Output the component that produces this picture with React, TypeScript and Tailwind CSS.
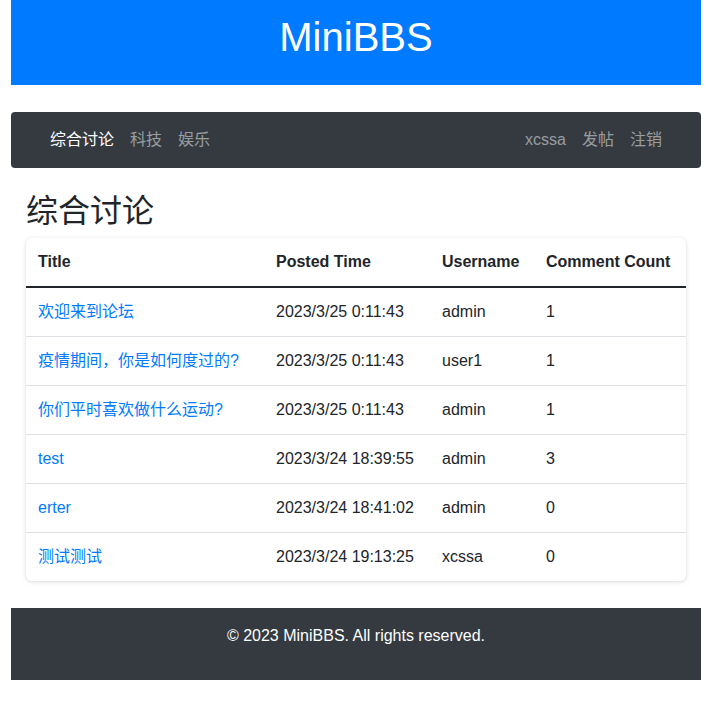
const posts = [
  { title: '欢迎来到论坛', time: '2023/3/25 0:11:43', user: 'admin', count: 1 },
  { title: '疫情期间，你是如何度过的?', time: '2023/3/25 0:11:43', user: 'user1', count: 1 },
  { title: '你们平时喜欢做什么运动?', time: '2023/3/25 0:11:43', user: 'admin', count: 1 },
  { title: 'test', time: '2023/3/24 18:39:55', user: 'admin', count: 3 },
  { title: 'erter', time: '2023/3/24 18:41:02', user: 'admin', count: 0 },
  { title: '测试测试', time: '2023/3/24 19:13:25', user: 'xcssa', count: 0 },
]

export default function App() {
  return (
    <div className="min-h-[718px] bg-white text-[16px] text-[#212529] font-['Liberation_Sans','Noto_Sans_CJK_SC',sans-serif]">
      <div className="ml-[11px] w-[690px]">
        <header className="h-[85px] bg-[#007bff] flex items-center justify-center pb-[12px]">
          <h1 className="text-[40px] leading-[1.2] text-white">MiniBBS</h1>
        </header>

        <nav className="mt-[27px] h-[56px] rounded bg-[#343a40] flex items-center justify-between px-[31px]">
          <ul className="flex">
            <li><a className="px-2 text-white" href="#">综合讨论</a></li>
            <li><a className="px-2 text-[rgba(255,255,255,0.5)]" href="#">科技</a></li>
            <li><a className="px-2 text-[rgba(255,255,255,0.5)]" href="#">娱乐</a></li>
          </ul>
          <ul className="flex">
            <li><a className="px-2 text-[rgba(255,255,255,0.5)]" href="#">xcssa</a></li>
            <li><a className="px-2 text-[rgba(255,255,255,0.5)]" href="#">发帖</a></li>
            <li><a className="px-2 text-[rgba(255,255,255,0.5)]" href="#">注销</a></li>
          </ul>
        </nav>

        <main className="px-[15px]">
          <h2 className="mt-[24px] mb-[8px] text-[32px] leading-[1.2] font-normal">综合讨论</h2>
          <div className="rounded-md bg-white shadow-[0_1px_4px_rgba(0,0,0,0.15)] overflow-hidden">
            <table className="w-full table-fixed border-collapse">
              <colgroup>
                <col className="w-[238px]" />
                <col className="w-[166px]" />
                <col className="w-[104px]" />
                <col />
              </colgroup>
              <thead>
                <tr className="border-b-2 border-[#212529]">
                  <th className="p-3 text-left font-bold leading-6">Title</th>
                  <th className="p-3 text-left font-bold leading-6">Posted Time</th>
                  <th className="p-3 text-left font-bold leading-6">Username</th>
                  <th className="p-3 text-left font-bold leading-6 whitespace-nowrap">Comment Count</th>
                </tr>
              </thead>
              <tbody>
                {posts.map((p, i) => (
                  <tr key={i} className={i < posts.length - 1 ? 'border-b border-[#dee2e6]' : ''}>
                    <td className="p-3 leading-6 whitespace-nowrap">
                      <a className="text-[#007bff]" href="#">{p.title}</a>
                    </td>
                    <td className="p-3 leading-6 whitespace-nowrap">{p.time}</td>
                    <td className="p-3 leading-6">{p.user}</td>
                    <td className="p-3 leading-6">{p.count}</td>
                  </tr>
                ))}
              </tbody>
            </table>
          </div>
        </main>

        <footer className="mt-[27px] bg-[#343a40] pt-[16px] pb-[32px] text-center text-white leading-6">
          © 2023 MiniBBS. All rights reserved.
        </footer>
      </div>
    </div>
  )
}
